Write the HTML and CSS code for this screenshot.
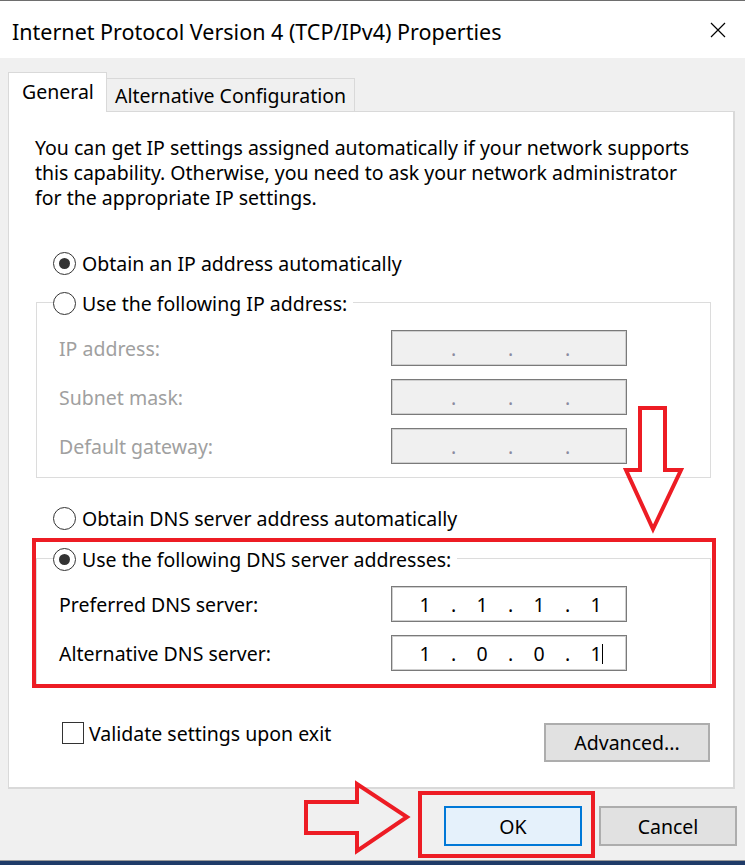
FILE: index.html
```html
<!DOCTYPE html>
<html lang="en">
<head>
    <meta charset="UTF-8">
    <meta name="viewport" content="width=device-width, initial-scale=1.0">
    <title>Internet Protocol Version 4 (TCP/IPv4) Properties</title>
    <link rel="stylesheet" href="styles.css">
</head>
<body>

<div class="dialog">
    <div class="titlebar">
        <span class="title">Internet Protocol Version 4 (TCP/IPv4) Properties</span>
        <svg class="close" width="16" height="16" viewBox="0 0 16 16">
            <path d="M1 1 L15 15 M15 1 L1 15" stroke="#000" stroke-width="1.2" fill="none"/>
        </svg>
    </div>

    <div class="body">
        <div class="tabs">
            <div class="tab active">General</div>
            <div class="tab">Alternative Configuration</div>
        </div>

        <div class="panel">
            <p class="intro">You can get IP settings assigned automatically if your network supports<br>
                this capability. Otherwise, you need to ask your network administrator<br>
                for the appropriate IP settings.</p>

            <div class="radio-row first">
                <span class="radio checked"></span>Obtain an IP address automatically
            </div>

            <div class="group disabled">
                <div class="legend"><span class="radio"></span>Use the following IP address:</div>
                <div class="field">
                    <span class="label">IP address:</span>
                    <div class="ipbox"><span class="oct"></span><span class="dot">.</span><span class="oct"></span><span class="dot">.</span><span class="oct"></span><span class="dot">.</span><span class="oct"></span></div>
                </div>
                <div class="field">
                    <span class="label">Subnet mask:</span>
                    <div class="ipbox"><span class="oct"></span><span class="dot">.</span><span class="oct"></span><span class="dot">.</span><span class="oct"></span><span class="dot">.</span><span class="oct"></span></div>
                </div>
                <div class="field">
                    <span class="label">Default gateway:</span>
                    <div class="ipbox"><span class="oct"></span><span class="dot">.</span><span class="oct"></span><span class="dot">.</span><span class="oct"></span><span class="dot">.</span><span class="oct"></span></div>
                </div>
            </div>

            <div class="radio-row dns-auto">
                <span class="radio"></span>Obtain DNS server address automatically
            </div>

            <div class="group dns">
                <div class="legend"><span class="radio checked"></span>Use the following DNS server addresses:</div>
                <div class="field">
                    <span class="label">Preferred DNS server:</span>
                    <div class="ipbox"><span class="oct">1</span><span class="dot">.</span><span class="oct">1</span><span class="dot">.</span><span class="oct">1</span><span class="dot">.</span><span class="oct">1</span></div>
                </div>
                <div class="field">
                    <span class="label">Alternative DNS server:</span>
                    <div class="ipbox"><span class="oct">1</span><span class="dot">.</span><span class="oct">0</span><span class="dot">.</span><span class="oct">0</span><span class="dot">.</span><span class="oct caret">1</span></div>
                </div>
            </div>

            <div class="bottom-row">
                <div class="check-row"><span class="checkbox"></span>Validate settings upon exit</div>
                <button class="btn advanced">Advanced...</button>
            </div>
        </div>

        <div class="footer">
            <button class="btn ok">OK</button>
            <button class="btn">Cancel</button>
        </div>
    </div>

    <div class="taskbar"></div>

    <!-- red annotations drawn over the dialog -->
    <div class="mark mark-dns"></div>
    <div class="mark mark-ok"></div>
    <svg class="arrow" width="745" height="865" viewBox="0 0 745 865">
        <polygon points="640,408 665,408 665,470 681,470 653,529 626,470 640,470" fill="none" stroke="#ed1c24" stroke-width="4" stroke-linejoin="miter"/>
        <polygon points="306,802 357,802 357,784 407,817 357,851 357,833 306,833" fill="none" stroke="#ed1c24" stroke-width="4" stroke-linejoin="miter"/>
    </svg>
</div>

</body>
</html>
```

FILE: styles.css
```css
html, body {
    margin: 0;
    padding: 0;
}
body {
    font-family: "Noto Sans", "Open Sans", sans-serif;
    font-size: 19.5px;
    color: #000;
    background-color: #f0f0f0;
}
.dialog {
    position: relative;
    width: 745px;
    height: 865px;
    display: flex;
    flex-direction: column;
    overflow: hidden;
}
.titlebar {
    height: 57px;
    background-color: #fff;
    border-top: 1px solid #6e6e6e;
    display: flex;
    align-items: center;
    justify-content: space-between;
    padding: 0 19px 0 12px;
}
.title {
    font-size: 21.5px;
    margin-top: 3px;
}
.close {
    margin-top: 1px;
}
.body {
    flex: 1;
    padding: 15px 0 0 8px;
}
.tabs {
    display: flex;
    align-items: flex-end;
    height: 38px;
}
.tab {
    height: 33px;
    padding: 0 8px;
    box-sizing: border-box;
    border: 1px solid #d9d9d9;
    border-bottom: none;
    border-left: none;
    display: flex;
    align-items: center;
    background-color: #f0f0f0;
}
.tab.active {
    position: relative;
    z-index: 1;
    height: 40px;
    margin-bottom: -1px;
    width: 99px;
    padding-left: 13px;
    padding-bottom: 2px;
    border-left: 1px solid #d9d9d9;
    background-color: #fff;
}
.panel {
    width: 727px;
    height: 678px;
    box-sizing: border-box;
    background-color: #fff;
    border: 1px solid #d9d9d9;
    border-bottom-width: 2px;
    border-right-width: 2px;
    padding: 23px 22px 0 27px;
}
.intro {
    margin: 0 0 0 -1px;
    line-height: 25px;
    white-space: nowrap;
}
.radio-row, .legend, .check-row {
    display: flex;
    align-items: center;
    height: 26px;
    white-space: nowrap;
}
.radio-row {
    padding-left: 17px;
}
.radio-row.first {
    margin-top: 40px;
}
.radio-row.dns-auto {
    margin-top: 27px;
}
.radio {
    width: 21px;
    height: 21px;
    border: 1.6px solid #333;
    border-radius: 50%;
    margin-right: 6px;
    flex-shrink: 0;
    display: flex;
    align-items: center;
    justify-content: center;
    background-color: #fff;
}
.radio.checked::after {
    content: "";
    width: 11px;
    height: 11px;
    border-radius: 50%;
    background-color: #333;
}
.group {
    border: 1px solid #dcdcdc;
    margin-top: 26px;
    padding: 0 0 13px 22px;
}
.group.dns {
    margin-top: 27px;
    padding-bottom: 13px;
}
.legend {
    margin: -13px 0 0 -6px;
    background-color: #fff;
    width: fit-content;
    padding: 0 6px 0 0;
}
.field {
    display: flex;
    align-items: center;
    height: 36px;
    margin-top: 13px;
}
.group .field:nth-child(2) {
    margin-top: 14px;
}
.label {
    width: 332px;
}
.disabled .label {
    color: #a0a0a0;
}
.ipbox {
    width: 236px;
    height: 36px;
    box-sizing: border-box;
    border: 1px solid #7a7a7a;
    box-shadow: inset 0 0 0 1px #cfcfcf;
    background-color: #fff;
    display: flex;
    align-items: center;
    padding-left: 13px;
}
.disabled .ipbox {
    background-color: #f0f0f0;
    color: #8a8aa0;
}
.oct {
    width: 40px;
    text-align: center;
    position: relative;
}
.dot {
    width: 17px;
    text-align: center;
}
.caret::after {
    content: "";
    position: absolute;
    top: 4px;
    left: 26px;
    width: 1px;
    height: 20px;
    background-color: #000;
}
.bottom-row {
    display: flex;
    justify-content: space-between;
    align-items: flex-start;
    margin-top: 38px;
    padding: 0 1px 0 26px;
}
.check-row {
    margin-top: -3px;
}
.checkbox {
    width: 20px;
    height: 20px;
    border: 1.6px solid #333;
    margin-right: 5px;
    background-color: #fff;
}
.btn {
    font-family: inherit;
    font-size: 19.5px;
    color: #000;
    height: 39px;
    border: 2px solid #adadad;
    background-color: #e1e1e1;
    padding: 0;
}
.advanced {
    width: 166px;
}
.footer {
    display: flex;
    justify-content: flex-end;
    gap: 17px;
    padding: 17px 8px 0 0;
}
.footer .btn {
    width: 138px;
    height: 40px;
}
.btn.ok {
    background-color: #e5f1fb;
    border-color: #0078d7;
}
.taskbar {
    height: 4px;
    border-top: 1px solid #9a9a9a;
    background-color: #1f3b68;
}
.mark {
    position: absolute;
    box-sizing: border-box;
    border: 4px solid #ed1c24;
}
.mark-dns {
    left: 32px;
    top: 538px;
    width: 684px;
    height: 150px;
}
.mark-ok {
    left: 418px;
    top: 791px;
    width: 177px;
    height: 67px;
}
.arrow {
    position: absolute;
    left: 0;
    top: 0;
    pointer-events: none;
}
```
